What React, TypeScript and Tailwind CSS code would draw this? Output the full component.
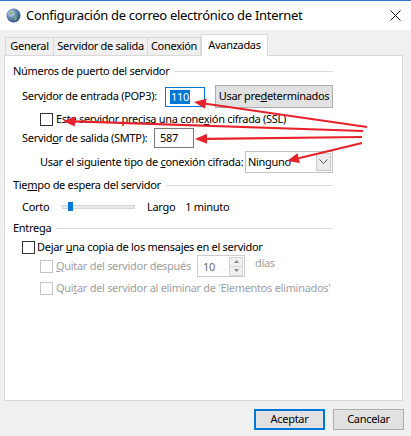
import React from 'react'

const arrows = [
  { x1: 367, y1: 126, x2: 194, y2: 101 },
  { x1: 363, y1: 130, x2: 63, y2: 120 },
  { x1: 362, y1: 136, x2: 195, y2: 138 },
  { x1: 362, y1: 142, x2: 287, y2: 160 },
]

function Arrows() {
  return (
    <svg className="pointer-events-none absolute left-0 top-0" width={411} height={436}>
      {arrows.map((a, i) => {
        const dx = a.x2 - a.x1
        const dy = a.y2 - a.y1
        const len = Math.sqrt(dx * dx + dy * dy)
        const ux = dx / len
        const uy = dy / len
        const bx = a.x2 - ux * 12
        const by = a.y2 - uy * 12
        const px = -uy * 5
        const py = ux * 5
        return (
          <g key={i}>
            <line x1={a.x1} y1={a.y1} x2={bx} y2={by} stroke="#e8222b" strokeWidth={2.2} />
            <polygon
              points={`${a.x2},${a.y2} ${bx + px},${by + py} ${bx - px},${by - py}`}
              fill="#e8222b"
            />
          </g>
        )
      })}
    </svg>
  )
}

function Check({ disabled }: { disabled?: boolean }) {
  return (
    <span
      className={
        disabled
          ? 'h-[13px] w-[13px] shrink-0 border border-[#c5c5c5] bg-white'
          : 'h-[13px] w-[13px] shrink-0 border border-[#333333] bg-white'
      }
    />
  )
}

function GroupTitle({ children }: { children: React.ReactNode }) {
  return (
    <div className="flex h-[16px] items-center pr-[69px]">
      <span>{children}</span>
      <span className="ml-[5px] h-px flex-1 bg-[#dcdcdc]" />
    </div>
  )
}

export default function App() {
  return (
    <div
      className="relative h-[436px] w-[411px] overflow-hidden whitespace-nowrap border-t border-[#2b79d0] bg-[#f0f0f0] text-[11px] tracking-[-0.3px] text-black"
      style={{ fontFamily: '"Noto Sans", "Open Sans", sans-serif' }}
    >
      {/* title bar */}
      <div className="flex h-[29px] items-center bg-white pl-[6px] pr-[10px]">
        <svg width="15" height="15" viewBox="0 0 15 15">
          <defs>
            <radialGradient id="g" cx="0.35" cy="0.35" r="0.7">
              <stop offset="0" stopColor="#e6eef7" />
              <stop offset="0.45" stopColor="#6c8fb8" />
              <stop offset="1" stopColor="#2e4f7d" />
            </radialGradient>
          </defs>
          <circle cx="7.5" cy="7.5" r="7" fill="url(#g)" />
          <path d="M4 4 q2 -1 3 1 q-1 2 -3 2 z" fill="#6fb45a" />
          <path d="M8 9 q2 -1 3 1 q-1 2 -2 3 z" fill="#6fb45a" />
        </svg>
        <span className="ml-[5px] text-[13px] tracking-[-0.3px]">
          Configuración de correo electrónico de Internet
        </span>
        <svg className="ml-auto" width="11" height="11" viewBox="0 0 11 11">
          <path d="M0.5 0.5 L10.5 10.5 M10.5 0.5 L0.5 10.5" stroke="#111" strokeWidth="1" />
        </svg>
      </div>

      {/* tabs */}
      <div className="mt-[4px] flex items-end pl-[5px]">
        <div className="flex h-[18px] w-[48px] items-center justify-center border border-b-0 border-r-0 border-[#d9d9d9]">
          General
        </div>
        <div className="flex h-[18px] w-[94px] items-center justify-center border border-b-0 border-r-0 border-[#d9d9d9]">
          Servidor de salida
        </div>
        <div className="flex h-[18px] w-[54px] items-center justify-center border border-b-0 border-[#d9d9d9]">
          Conexión
        </div>
        <div className="relative z-10 -mb-px flex h-[22px] w-[67px] items-center justify-center border border-b-0 border-[#d9d9d9] bg-white">
          Avanzadas
        </div>
      </div>

      {/* panel */}
      <div className="ml-[4px] h-[346px] w-[399px] border border-[#d9d9d9] bg-white pl-[8px]">
        <div className="mt-[7px]">
          <GroupTitle>Números de puerto del servidor</GroupTitle>
        </div>

        <div className="mt-[6px] flex h-[23px] items-center pl-[9px]">
          <span className="w-[143px]">
            Serv<span className="underline">i</span>dor de entrada (POP3):
          </span>
          <div className="flex h-[20px] w-[40px] items-center border border-[#0078d7] pl-[4px]">
            <span className="bg-[#0078d7] px-px leading-[14px] text-white">110</span>
          </div>
          <div className="ml-[10px] flex h-[23px] w-[118px] items-center justify-center border border-[#adadad] bg-[#e1e1e1]">
            Usar pre<span className="underline">d</span>eterminados
          </div>
        </div>

        <div className="mt-[5px] flex h-[13px] items-center gap-[3px] pl-[27px]">
          <Check />
          <span>
            Este servidor precisa una cone<span className="underline">x</span>ión cifrada (SSL)
          </span>
        </div>

        <div className="mt-[2px] flex h-[20px] items-center pl-[9px]">
          <span className="w-[132px]">
            Servid<span className="underline">o</span>r de salida (SMTP):
          </span>
          <div className="flex h-[20px] w-[40px] items-center border border-[#7a7a7a] pl-[5px]">
            587
          </div>
        </div>

        <div className="mt-[3px] flex h-[22px] items-center pl-[27px]">
          <span className="w-[205px]">
            Usar el siguiente tipo de <span className="underline">c</span>onexión cifrada:
          </span>
          <div className="flex h-[22px] w-[88px] items-center border border-[#c3c3c3] bg-white pl-[2px] pr-px">
            <span>Ninguno</span>
            <div className="ml-auto flex h-[18px] w-[15px] items-center justify-center border border-[#c9c9c9] bg-[#ececec]">
              <svg width="9" height="6" viewBox="0 0 9 6">
                <path d="M0.5 0.5 L4.5 4.5 L8.5 0.5" fill="none" stroke="#555" strokeWidth="1" />
              </svg>
            </div>
          </div>
        </div>

        <div className="mt-[4px]">
          <GroupTitle>
            Tie<span className="underline">m</span>po de espera del servidor
          </GroupTitle>
        </div>

        <div className="mt-[6px] flex h-[16px] items-center pl-[9px]">
          <span className="w-[40px]">Corto</span>
          <div className="relative flex h-[12px] w-[73px] items-center">
            <div className="h-[4px] w-full border border-[#d6d6d6] bg-[#e7eaea]" />
            <div className="absolute left-[6px] top-[1px] h-[9px] w-[5px] bg-[#0078d7]" />
          </div>
          <span className="ml-[12px]">Largo</span>
          <span className="ml-[10px]">1 minuto</span>
        </div>

        <div className="mt-[5px]">
          <GroupTitle>Entrega</GroupTitle>
        </div>

        <div className="mt-[5px] flex h-[13px] items-center gap-[2px] pl-[9px]">
          <Check />
          <span>
            Dejar <span className="underline">u</span>na copia de los mensajes en el servidor
          </span>
        </div>

        <div className="mt-[1px] flex h-[22px] items-center pl-[27px] text-[#a0a0a0]">
          <Check disabled />
          <span className="ml-[3px] w-[141px]">
            <span className="underline">Q</span>uitar del servidor después
          </span>
          <div className="flex h-[22px] w-[48px] items-center border border-[#cccccc] bg-white pl-[5px] pr-px text-[#6d6d6d]">
            <span className="mt-[3px]">10</span>
            <div className="ml-auto flex h-[19px] w-[14px] flex-col border border-[#d4d4d4] bg-[#f0f0f0]">
              <div className="flex flex-1 items-center justify-center border-b border-[#d4d4d4]">
                <svg width="5" height="3" viewBox="0 0 5 3">
                  <path d="M0 3 L2.5 0 L5 3 Z" fill="#8a8a8a" />
                </svg>
              </div>
              <div className="flex flex-1 items-center justify-center">
                <svg width="5" height="3" viewBox="0 0 5 3">
                  <path d="M0 0 L2.5 3 L5 0 Z" fill="#8a8a8a" />
                </svg>
              </div>
            </div>
          </div>
          <span className="mb-[5px] ml-[10px]">días</span>
        </div>

        <div className="mt-[5px] flex h-[13px] items-center pl-[27px] text-[#a0a0a0]">
          <Check disabled />
          <span className="ml-[3px]">
            Qui<span className="underline">t</span>ar del servidor al eliminar de 'Elementos eliminados'
          </span>
        </div>
      </div>

      {/* buttons */}
      <div className="mt-[8px] flex justify-end gap-[8px] pr-[7px]">
        <div className="flex h-[21px] w-[71px] items-center justify-center border-2 border-[#0078d7] bg-[#e1e1e1]">
          Aceptar
        </div>
        <div className="flex h-[21px] w-[71px] items-center justify-center border border-[#adadad] bg-[#e1e1e1]">
          Cancelar
        </div>
      </div>

      <Arrows />
    </div>
  )
}
